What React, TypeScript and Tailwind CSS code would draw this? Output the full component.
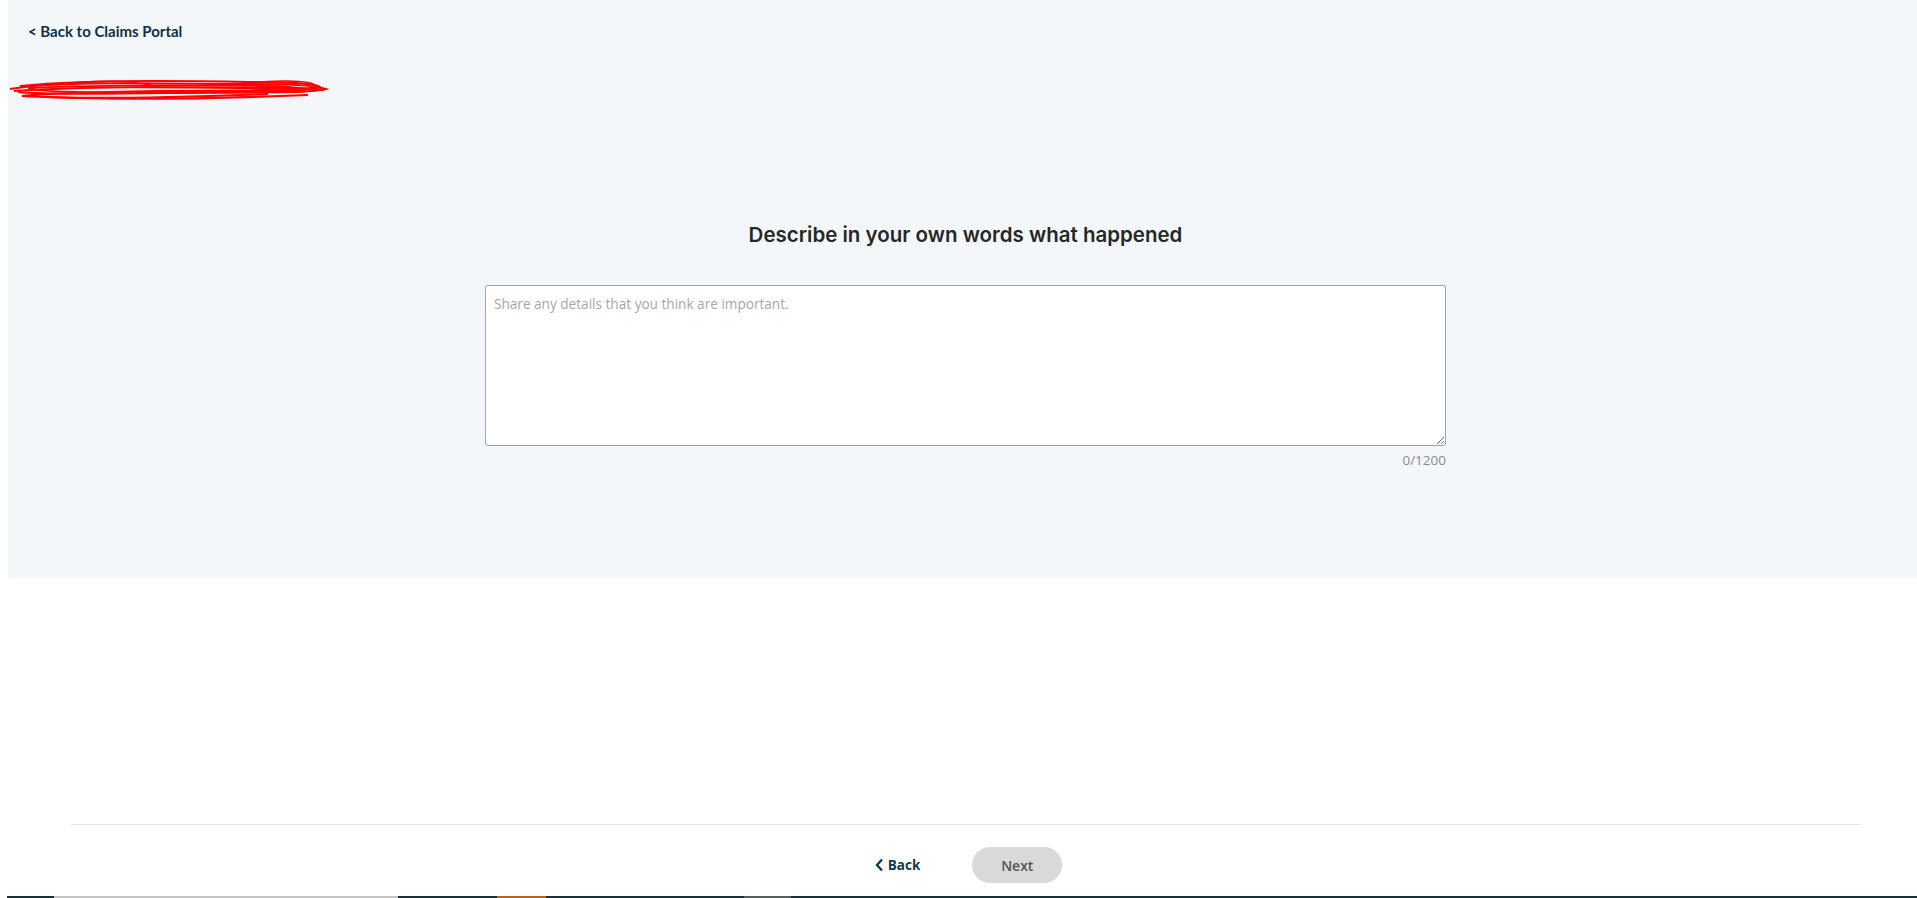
import React from 'react'

const Scribble = () => (
  <svg
    className="pointer-events-none absolute left-0 top-[77px]"
    width="322"
    height="26"
    viewBox="0 0 322 26"
    fill="none"
  >
    <path
      d="M2 12 C40 5 120 6 200 7 C250 7 300 6 318 12 C300 17 230 15 160 16 C100 17 40 18 10 15"
      stroke="#ff0000"
      strokeWidth="2"
    />
    <path
      d="M12 9 C60 4 150 3 240 5 C280 5 310 7 312 10 C300 15 220 13 150 14 C90 15 30 17 14 19 C60 22 150 21 260 17"
      stroke="#ff0000"
      strokeWidth="2"
    />
    <path
      d="M6 14 C80 9 160 10 230 11 C270 11 300 10 316 13 M40 20 C110 23 200 22 300 18"
      stroke="#ff0000"
      strokeWidth="2.2"
    />
    <path
      d="M20 11 C100 7 180 8 250 9 C280 9 300 11 296 14 C260 16 200 14 120 15 C70 16 30 14 24 12"
      stroke="#ff0000"
      strokeWidth="1.8"
    />
    <path
      d="M230 8 C260 2 305 3 308 9 C300 14 250 14 235 10 M60 7 C90 2 130 4 150 10"
      stroke="#ff0000"
      strokeWidth="1.5"
    />
  </svg>
)

const ChevronLeft = () => (
  <svg width="9" height="14" viewBox="0 0 9 14" fill="none">
    <path d="M7 1.5 L2 7 L7 12.5" stroke="#0f3a4f" strokeWidth="2.4" />
  </svg>
)

export default function App() {
  return (
    <div className="flex h-[898px] w-full flex-col overflow-hidden bg-white">
      {/* top panel */}
      <div className="relative ml-2 h-[578px] bg-[#f3f7fa]">
        <div className="pl-5 pt-[19px]">
          <a
            href="#"
            className="font-['Lato',sans-serif] text-[15px] font-bold text-[#102f46]"
          >
            &lt; Back to Claims Portal
          </a>
        </div>
        <Scribble />

        <div className="mt-[178px] flex flex-col items-center">
          <h1 className="translate-x-[3px] font-['Inter',sans-serif] text-[20.5px] leading-7 font-semibold text-[#272727]">
            Describe in your own words what happened
          </h1>
          <div className="mt-[36px] w-[961px] translate-x-[3px]">
            <textarea
              className="block h-[161px] w-full resize-y rounded-[3px] border border-[#9aa3ae] bg-white px-2 pt-[8px] pb-[7px] font-['Open_Sans',sans-serif] text-[13.6px] text-[#333] outline-none placeholder:text-[#a3a8b0]"
              placeholder="Share any details that you think are important."
            />
            <div className="mt-[4px] text-right font-['Open_Sans',sans-serif] text-[13.5px] text-[#8a8a8a]">
              0/1200
            </div>
          </div>
        </div>
      </div>

      <div className="flex-1" />

      {/* footer navigation */}
      <div className="ml-[71px] mr-[56px] border-t border-[#e6e6e6]" />
      <div className="flex h-[71px] items-start justify-center pt-[22px]">
        <div className="ml-[20px] flex items-center gap-[52px]">
          <button className="flex items-center gap-[4px] font-['Open_Sans',sans-serif] text-[13.5px] font-bold text-[#0f3a4f]">
            <ChevronLeft />
            Back
          </button>
          <button className="h-[36px] w-[90px] rounded-full bg-[#d9d9d9] font-['Open_Sans',sans-serif] text-[14px] font-semibold text-[#555]">
            Next
          </button>
        </div>
      </div>

      {/* site footer peeking at the bottom */}
      <div className="flex h-[2px] bg-[#1c3035]">
        <div className="w-[7px] bg-white" />
        <div className="w-[47px]" />
        <div className="w-[344px] bg-[#c4c4c4]" />
        <div className="w-[99px]" />
        <div className="w-[49px] bg-[#b5651d]" />
        <div className="w-[198px]" />
        <div className="w-[47px] bg-[#55605f]" />
        <div className="flex-1" />
      </div>
    </div>
  )
}
